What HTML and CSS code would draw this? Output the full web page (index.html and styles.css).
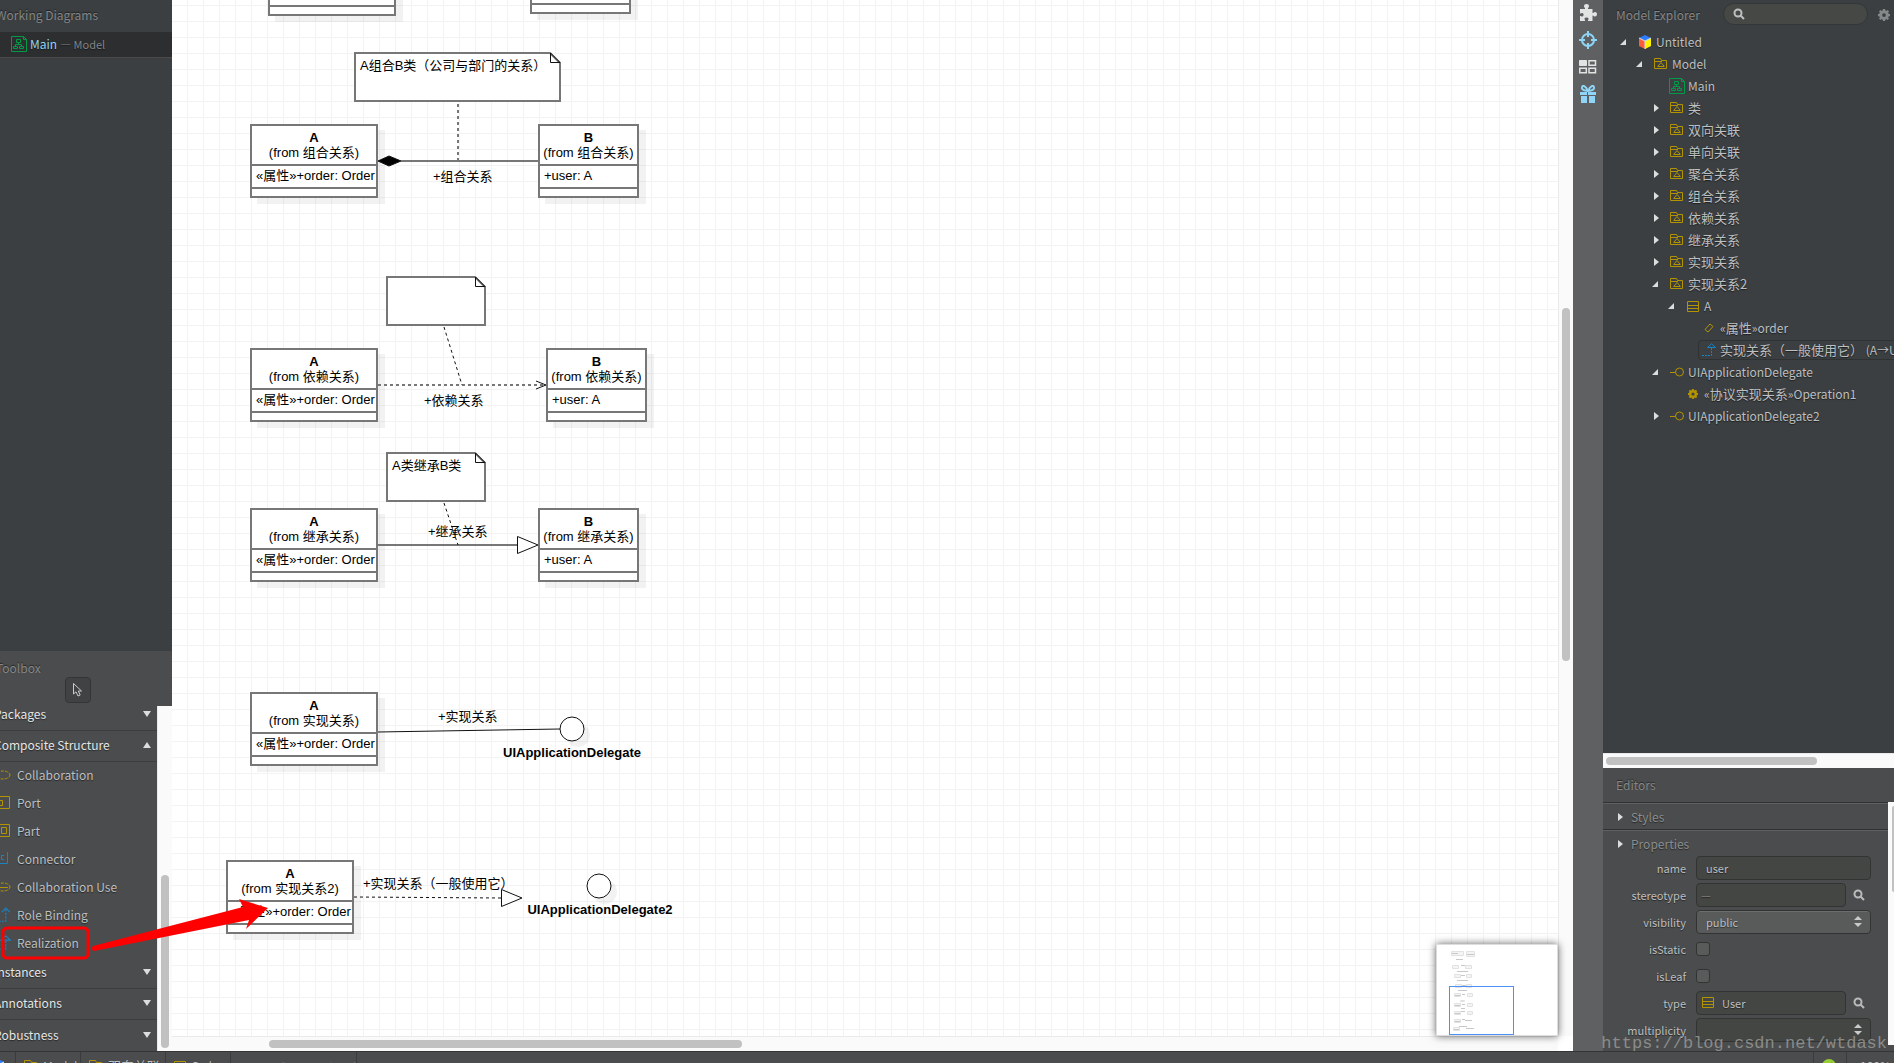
FILE: index.html
```html
<!DOCTYPE html>
<html lang="zh-CN">
<head>
    <meta charset="UTF-8">
    <meta name="viewport" content="width=device-width, initial-scale=1.0">
    <title>Untitled - Main</title>
    <link rel="stylesheet" href="styles.css">
</head>
<body>
    <!-- shared icons -->
    <svg class="sprite" aria-hidden="true">
        <symbol id="i-package" viewBox="0 0 14 12">
            <path d="M.5 3.5V.5H6.5L7.5 2.5H12.5V10.5H.5V3.5H8M3.5 8.5H10.5M4 8L7 4.5L10 8" fill="none" stroke="#b29300"/>
        </symbol>
        <symbol id="i-diagram" viewBox="0 0 16 16">
            <path d="M.5 .5H12.5L15.5 3.5V15.5H.5ZM12.5 .5V3.5H15.5M5.500 3.500H9.500V6.500H5.500ZM7.500 6.500V8.500M4.500 10.500V8.500H10.500V10.500M2.500 10.500H6.500V12.500H2.500ZM8.500 10.500H12.500V12.500H8.500Z" fill="none" stroke="#009b46"/>
        </symbol>
        <symbol id="i-class" viewBox="0 0 12 11">
            <path d="M.5 .5H11.500V10.500H.5ZM.5 4.500H11.500M.5 7.500H11.500" fill="none" stroke="#b29300"/>
        </symbol>
        <symbol id="i-attr" viewBox="0 0 10 10">
            <path d="M1 6.500L6 1L9 3.500L4 9Z" fill="none" stroke="#b29300"/>
        </symbol>
        <symbol id="i-realize" viewBox="0 0 14 14">
            <path d="M9.500 .8L13.500 4.500H5.500Z" fill="none" stroke="#1784c7"/>
            <path d="M9.500 5V12.500H0" fill="none" stroke="#1784c7" stroke-dasharray="2 1"/>
        </symbol>
        <symbol id="i-bind" viewBox="0 0 14 14">
            <path d="M6 4.500L9.500 1L13 4.500" fill="none" stroke="#1784c7"/>
            <path d="M9.500 2V12.500H0" fill="none" stroke="#1784c7" stroke-dasharray="2 1"/>
        </symbol>
        <symbol id="i-interface" viewBox="0 0 14 10">
            <path d="M0 5.500H5" stroke="#b29300"/>
            <circle cx="9.500" cy="5" r="4" fill="none" stroke="#b29300"/>
        </symbol>
        <symbol id="i-gear" viewBox="0 0 16 16">
            <circle cx="8" cy="8" r="4.500" fill="none" stroke="currentColor" stroke-width="4"/>
            <path d="M8 0V3M8 13V16M0 8H3M13 8H16M2.300 2.300L4 4M12 12L13.700 13.700M13.700 2.300L12 4M4 12L2.300 13.700" stroke="currentColor" stroke-width="3"/>
        </symbol>
        <symbol id="i-search" viewBox="0 0 12 12">
            <circle cx="5" cy="5" r="3.500" fill="none" stroke="currentColor" stroke-width="2"/>
            <path d="M7.500 7.500L11 11" stroke="currentColor" stroke-width="2"/>
        </symbol>
        <symbol id="i-collab" viewBox="0 0 16 10">
            <ellipse cx="8" cy="5" rx="7" ry="4" fill="none" stroke="#b29300" stroke-dasharray="3 1"/>
        </symbol>
        <symbol id="i-cube" viewBox="0 0 14 14">
            <path d="M7 0L13 3L7 6L1 3Z" fill="#2f7bff"/>
            <path d="M1 3L7 6V14L1 11Z" fill="#ff5c39"/>
            <path d="M13 3L7 6V14L13 11Z" fill="#fff200"/>
            <path d="M1 3L7 6V14M7 6L13 3" fill="none" stroke="#cfe2ee"/>
        </symbol>
    </svg>

    <main class="workspace">
        <aside class="sidebar">
            <section class="diagrams">
                <h2 class="panel-title">Working Diagrams</h2>
                <a class="diagram-link" href="#main">
                    <svg class="icon-16"><use href="#i-diagram"/></svg>
                    <span>Main</span> <small>— Model</small>
                </a>
            </section>
            <section class="toolbox">
                <h2 class="panel-title">Toolbox</h2>
                <button class="select-tool" aria-label="Select">
                    <svg width="12" height="16" viewBox="0 0 12 16"><path d="M1.500 1.500V12L4 9.800L6 14L8.200 13L6.300 9H9.500Z" fill="none" stroke="#c8cccd"/></svg>
                </button>
                <div class="tool-scroll">
                    <div class="tool-list">
                        <button class="group">Packages<i class="caret down"></i></button>
                        <button class="group">Composite Structure<i class="caret up"></i></button>
                        <button class="tool"><svg width="16" height="10"><use href="#i-collab"/></svg>Collaboration</button>
                        <button class="tool"><svg width="16" height="14" viewBox="0 0 16 14"><path d="M3.500 4V.5H14.500V12.500H3.500V9M1.500 4.500H7.500V9.500H1.500Z" fill="none" stroke="#b29300"/></svg>Port</button>
                        <button class="tool"><svg width="16" height="14" viewBox="0 0 16 14"><path d="M3.500 .5H14.500V12.500H3.500ZM6.500 3.500H11.500V9.500H6.500Z" fill="none" stroke="#b29300"/></svg>Part</button>
                        <button class="tool"><svg width="16" height="14" viewBox="0 0 16 14"><path d="M12.500 0V11.500H0M9 3.500H6.500V7.500H9" fill="none" stroke="#1784c7"/></svg>Connector</button>
                        <button class="tool"><svg width="16" height="10" viewBox="0 0 16 10"><use href="#i-collab"/><path d="M3 5.500H13" stroke="#b29300"/></svg>Collaboration Use</button>
                        <button class="tool"><svg width="16" height="16"><use href="#i-bind"/></svg>Role Binding</button>
                        <button class="tool"><svg width="16" height="16"><use href="#i-realize"/></svg>Realization</button>
                        <button class="group">Instances<i class="caret down"></i></button>
                        <button class="group">Annotations<i class="caret down"></i></button>
                        <button class="group">Robustness<i class="caret down"></i></button>
                    </div>
                    <div class="track vertical"><div class="thumb"></div></div>
                </div>
            </section>
        </aside>

        <section class="editor">
            <div class="canvas" id="main">
                <div class="uml wide" id="n1"><header><b>A</b><span>(from 聚合关系)</span></header><p>«属性»+order: Order</p><p></p></div>
                <div class="uml narrow" id="n2"><header><b>B</b><span>(from 聚合关系)</span></header><p>+user: A</p><p></p></div>
                <div class="uml wide" id="n3"><header><b>A</b><span>(from 组合关系)</span></header><p>«属性»+order: Order</p><p></p></div>
                <div class="uml narrow" id="n4"><header><b>B</b><span>(from 组合关系)</span></header><p>+user: A</p><p></p></div>
                <div class="uml wide" id="n5"><header><b>A</b><span>(from 依赖关系)</span></header><p>«属性»+order: Order</p><p></p></div>
                <div class="uml narrow" id="n6"><header><b>B</b><span>(from 依赖关系)</span></header><p>+user: A</p><p></p></div>
                <div class="uml wide" id="n7"><header><b>A</b><span>(from 继承关系)</span></header><p>«属性»+order: Order</p><p></p></div>
                <div class="uml narrow" id="n8"><header><b>B</b><span>(from 继承关系)</span></header><p>+user: A</p><p></p></div>
                <div class="uml wide" id="n9"><header><b>A</b><span>(from 实现关系)</span></header><p>«属性»+order: Order</p><p></p></div>
                <div class="uml wide" id="n10"><header><b>A</b><span>(from 实现关系2)</span></header><p>«属性»+order: Order</p><p></p></div>

                <!-- notes, connectors and their labels -->
                <svg class="links">
                    <g class="soft">
                        <path class="note" d="M183 53H378L388 63V101H183Z"/>
                        <path class="note" d="M215 277H303L313 287V325H215Z"/>
                        <path class="note" d="M215 453H303L313 463V501H215Z"/>
                        <path d="M229 161H366M206 545H345"/>
                        <path class="dash" d="M286 104V161M206 385H374"/>
                    </g>
                    <g class="sharp">
                        <path d="M378.500 53V62.500H388ZM303.500 277V286.500H313ZM303.500 453V462.500H313Z"/>
                        <path d="M364 381L374 385L364 389"/>
                        <path class="fill" d="M345.500 536.500V553.500L366 545ZM329.500 889.500V906.500L350 898Z"/>
                        <path d="M206 732L388 729"/>
                        <path class="dash" d="M272 327L290 385M272 503L286 545M182 897L329 898"/>
                        <path class="diamond" d="M206 161L217 156L229 161L217 166Z"/>
                        <circle class="shade" cx="406" cy="735" r="12"/>
                        <circle class="fill" cx="400" cy="729" r="12"/>
                        <circle class="shade" cx="433" cy="892" r="12"/>
                        <circle class="fill" cx="427" cy="886" r="12"/>
                    </g>
                    <text x="188" y="70">A组合B类（公司与部门的关系）</text>
                    <text x="220" y="470">A类继承B类</text>
                    <text x="261" y="181">+组合关系</text>
                    <text x="252" y="405">+依赖关系</text>
                    <text x="256" y="536">+继承关系</text>
                    <text x="266" y="721">+实现关系</text>
                    <text x="191" y="888">+实现关系（一般使用它）</text>
                    <text class="name" x="400" y="757">UIApplicationDelegate</text>
                    <text class="name" x="428" y="914">UIApplicationDelegate2</text>
                </svg>

                <div class="minimap">
                    <svg width="120" height="90" viewBox="0 0 120 90">
                        <g fill="#f4f4f4" stroke="#e2e2e2">
                            <path d="M14.500 6.500h12v4h-12zM29.500 6.500h8v5h-8zM15.500 20.500h6v3h-6zM28.500 20.500h6v3h-6zM17.500 29.500h6v3h-6zM29.500 29.500h5v3h-5zM18.500 39.500h6v3h-6zM29.500 39.500h5v3h-5zM17.500 48.500h6v3h-6zM30.500 48.500h5v3h-5zM17.500 58.500h6v3h-6zM30.500 58.500h5v3h-5zM17.500 66.500h6v3h-6zM30.500 66.500h5v3h-5zM17.500 74.500h6v3h-6zM16.500 82.500h6v3h-6zM23.500 55.500h4v1h-4z"/>
                        </g>
                        <path d="M19 14.500h7M20 26.500h11M20 35.500h11M21 45.500h9M24 20.500h4M24 30.500h4M25 40.500h4M25 49.500h3M25 59.500h3M24 63.500h4M24 66.500h4M25 74.500h3M28 75.500h7M22 81.500h8M29 83.500h8M15 8.500h6M30 9.500h7M18 50.500h5M18 60.500h5M18 68.500h5M18 76.500h5M17 84.500h5" stroke="#c8c8c8"/>
                        <rect x="12.500" y="41.500" width="64" height="48" fill="none" stroke="#4a90f5"/>
                    </svg>
                </div>
            </div>
            <div class="track vertical"><div class="thumb"></div></div>
            <div class="track horizontal"><div class="thumb canvas-h"></div></div>
        </section>

        <nav class="toolbar">
            <button aria-label="Extensions">
                <svg width="18" height="18" viewBox="0 0 18 18"><path d="M1 5H6C6.500 4 5 3.500 5 2.200C5 .8 6 0 7.500 0S10 .8 10 2.200C10 3.500 8.500 4 9 5H13.500V9C14.500 9.500 14.500 8 16 8C17.300 8 18 9 18 10.200S17.300 12.500 16 12.500C14.500 12.500 14.500 11 13.500 11.500V17H9C8.500 16 10 15.500 9.500 14.500C9 13.300 6 13.300 5.500 14.500C5.300 15.500 6.500 16 6 17H1V12C2 11.500 2.500 13 3.500 12.500C5 12 5 9.500 3.500 9C2.500 8.500 2 10 1 9.500Z" fill="#e2e3e3"/></svg>
            </button>
            <button aria-label="Alignment">
                <svg width="18" height="18" viewBox="0 0 18 18"><circle cx="9" cy="9" r="6" fill="none" stroke="#8fd5f7" stroke-width="2"/><path d="M9 0V6M9 12V18M0 9H6M12 9H18" stroke="#8fd5f7" stroke-width="2"/></svg>
            </button>
            <button aria-label="Layout">
                <svg width="18" height="14" viewBox="0 0 18 14"><path d="M.5 .5H7.500V5.500H.5Z" fill="#e2e3e3" stroke="#e2e3e3"/><path d="M10 .8H16.500V5.300H10ZM.8 8.300H7.300V12.800H.8ZM10 8.300H16.500V12.800H10Z" fill="none" stroke="#e2e3e3" stroke-width="1.500"/></svg>
            </button>
            <button aria-label="What's new">
                <svg width="18" height="18" viewBox="0 0 18 18"><path d="M1 7H17V10H1ZM2 11H8V18H2ZM10 11H16V18H10Z" fill="#8fd5f7"/><path d="M9 6C7 1 3 -1 3 3C3 6 6 5 9 6C12 5 15 6 15 3C15 -1 11 1 9 6Z" fill="none" stroke="#8fd5f7" stroke-width="2"/><path d="M8.500 7V18" stroke="#5f6061"/></svg>
            </button>
        </nav>

        <aside class="inspector">
            <section class="explorer">
                <header class="explorer-head">
                    <h2 class="panel-title">Model Explorer</h2>
                    <label class="search"><svg class="icon-12"><use href="#i-search"/></svg><input type="search" aria-label="Search"></label>
                    <button class="plain gear" aria-label="Settings"><svg class="icon-12"><use href="#i-gear"/></svg></button>
                </header>
                <ul class="tree">
                    <li class="l0"><i class="open"></i><span class="node"><svg width="14" height="14"><use href="#i-cube"/></svg>Untitled</span></li>
                    <li class="l1"><i class="open"></i><span class="node"><svg width="14" height="12"><use href="#i-package"/></svg>Model</span></li>
                    <li class="l2"><i></i><span class="node"><svg width="16" height="16"><use href="#i-diagram"/></svg>Main</span></li>
                    <li class="l2"><i class="closed"></i><span class="node cn"><svg width="14" height="12"><use href="#i-package"/></svg>类</span></li>
                    <li class="l2"><i class="closed"></i><span class="node cn"><svg width="14" height="12"><use href="#i-package"/></svg>双向关联</span></li>
                    <li class="l2"><i class="closed"></i><span class="node cn"><svg width="14" height="12"><use href="#i-package"/></svg>单向关联</span></li>
                    <li class="l2"><i class="closed"></i><span class="node cn"><svg width="14" height="12"><use href="#i-package"/></svg>聚合关系</span></li>
                    <li class="l2"><i class="closed"></i><span class="node cn"><svg width="14" height="12"><use href="#i-package"/></svg>组合关系</span></li>
                    <li class="l2"><i class="closed"></i><span class="node cn"><svg width="14" height="12"><use href="#i-package"/></svg>依赖关系</span></li>
                    <li class="l2"><i class="closed"></i><span class="node cn"><svg width="14" height="12"><use href="#i-package"/></svg>继承关系</span></li>
                    <li class="l2"><i class="closed"></i><span class="node cn"><svg width="14" height="12"><use href="#i-package"/></svg>实现关系</span></li>
                    <li class="l2"><i class="open"></i><span class="node cn"><svg width="14" height="12"><use href="#i-package"/></svg>实现关系2</span></li>
                    <li class="l3"><i class="open"></i><span class="node"><svg width="12" height="11"><use href="#i-class"/></svg>A</span></li>
                    <li class="l4"><i></i><span class="node"><svg width="10" height="10"><use href="#i-attr"/></svg><span>«<span class="cn">属性</span>»order</span></span></li>
                    <li class="l4"><i></i><span class="node selected"><svg width="14" height="14"><use href="#i-realize"/></svg><span><span class="cn">实现关系（一般使用它）</span> (A→UIApplicationDelegate2)</span></span></li>
                    <li class="l2"><i class="open"></i><span class="node"><svg width="14" height="10"><use href="#i-interface"/></svg>UIApplicationDelegate</span></li>
                    <li class="l3"><i></i><span class="node op"><svg width="10" height="10"><use href="#i-gear"/></svg><span>«<span class="cn">协议实现关系</span>»Operation1</span></span></li>
                    <li class="l2"><i class="closed"></i><span class="node"><svg width="14" height="10"><use href="#i-interface"/></svg>UIApplicationDelegate2</span></li>
                </ul>
                <div class="track horizontal"><div class="thumb tree-thumb"></div></div>
            </section>
            <section class="editors">
                <h2 class="panel-title">Editors</h2>
                <div class="editors-scroll">
                    <form class="props">
                        <h3><i class="closed"></i>Styles</h3>
                        <h3><i class="closed"></i>Properties</h3>
                        <div class="row"><label for="name">name</label><input id="name" class="field" type="text" value="user"></div>
                        <div class="row"><label for="stereotype">stereotype</label><input id="stereotype" class="field empty" type="text" value="—"><button type="button" class="plain" aria-label="Find stereotype"><svg class="icon-12"><use href="#i-search"/></svg></button></div>
                        <div class="row"><label for="visibility">visibility</label><span class="select"><select id="visibility" class="field raised"><option>public</option><option>private</option></select><i class="spin"></i></span></div>
                        <div class="row"><label for="isStatic">isStatic</label><input id="isStatic" type="checkbox"></div>
                        <div class="row"><label for="isLeaf">isLeaf</label><input id="isLeaf" type="checkbox"></div>
                        <div class="row"><label for="type">type</label><span class="select"><svg class="type-icon" width="12" height="11"><use href="#i-class"/></svg><input id="type" class="field with-icon" type="text" value="User"></span><button type="button" class="plain" aria-label="Find type"><svg class="icon-12"><use href="#i-search"/></svg></button></div>
                        <div class="row"><label for="multiplicity">multiplicity</label><span class="select"><select id="multiplicity" class="field"><option></option><option>1</option></select><i class="spin"></i></span></div>
                    </form>
                    <div class="track props-track"><div class="thumb props-thumb"></div></div>
                </div>
            </section>
        </aside>
    </main>

    <footer class="statusbar">
        <span class="first"><svg width="14" height="14"><use href="#i-cube"/></svg></span>
        <span class="model"><svg width="14" height="12"><use href="#i-package"/></svg>Model</span>
        <span class="package cn"><svg width="14" height="12"><use href="#i-package"/></svg>双向关联</span>
        <span class="order"><svg width="12" height="11"><use href="#i-class"/></svg>Order</span>
        <span class="kind">[UMLAttribute]</span>
        <span class="status-ok"><svg width="14" height="14" viewBox="0 0 14 14"><circle cx="7" cy="7" r="7" fill="#96cc34"/><path d="M4 7L6.500 9.500L10.500 4" fill="none" stroke="#4b4c4d" stroke-width="2"/></svg></span>
        <span class="zoom">100%</span>
    </footer>

    <!-- red callout from the tool to the class -->
    <svg class="callout" width="280" height="80" viewBox="0 0 280 80" aria-hidden="true">
        <rect x="3" y="37" width="85" height="30" rx="4" fill="none" stroke="#f00" stroke-width="3"/>
        <path d="M93 55Q90 58 94 60L249 29L246 38L268 17L239 8L243 16Z" fill="#f00"/>
    </svg>
    <div class="watermark">https://blog.csdn.net/wtdask</div>
</body>
</html>
```

FILE: styles.css
```css
* {
    margin: 0;
    padding: 0;
    box-sizing: border-box;
}
body {
    position: relative;
    display: flex;
    flex-direction: column;
    height: 100vh;
    overflow: hidden;
    background: #4b4c4d;
    color: #bdbfc0;
    font: 12px/16px "Noto Sans CJK SC", sans-serif;
    text-shadow: 0 1px 1px rgba(0, 0, 0, 0.5);
}
button, input, select {
    font: inherit;
    color: inherit;
    text-shadow: inherit;
    border: none;
    background: none;
}
svg {
    flex: none;
}
.sprite {
    position: absolute;
    width: 0;
    height: 0;
}
.icon-16 {
    width: 16px;
    height: 16px;
}
.icon-12 {
    width: 12px;
    height: 12px;
}
.cn {
    font-size: 13px;
}
.workspace {
    flex: 1;
    display: flex;
    min-height: 0;
}
.panel-title {
    color: #848687;
    font-size: 12px;
    font-weight: normal;
    text-shadow: 0 -1px 1px rgba(0, 0, 0, 0.5);
}

/* scrollbars */
.track {
    background: #fafafa;
}
.track.vertical {
    width: 15px;
    padding: 4px;
    border-left: 1px solid #eaeaea;
}
.track.horizontal {
    height: 15px;
    padding: 4px 3px;
    border-top: 1px solid #eaeaea;
}
.thumb {
    border-radius: 4px;
    background: #c1c1c1;
}
.vertical .thumb {
    width: 8px;
    margin-left: -1px;
}
.horizontal .thumb {
    height: 8px;
    margin-top: -1px;
}
.canvas-h {
    width: 473px;
    margin-left: 94px;
}
.tree-thumb {
    width: 74%;
}

/* left sidebar, its left edge runs off the window */
.sidebar {
    flex: none;
    display: flex;
    flex-direction: column;
    width: 184px;
    margin-left: -12px;
}
.diagrams {
    flex: 1;
    background: #3b3f41;
}
.diagrams .panel-title {
    padding: 7px 8px 9px;
}
.diagram-link {
    display: flex;
    align-items: center;
    gap: 3px;
    height: 26px;
    padding: 0 0 1px 23px;
    background: #2d2e30;
    border-bottom: 1px solid #4a4a4b;
    color: #8fd5f7;
    text-decoration: none;
}
.diagram-link small {
    color: #828485;
    font-size: 11px;
}
.toolbox {
    flex: none;
    background: #4b4c4d;
}
.toolbox .panel-title {
    padding: 9px 8px 1px;
}
.select-tool {
    display: flex;
    align-items: center;
    justify-content: center;
    width: 26px;
    height: 26px;
    margin: 0 0 3px 77px;
    background: #414243;
    border: 1px solid #343536;
    border-radius: 4px;
}
.tool-scroll {
    display: flex;
    height: 345px;
}
.tool-list {
    flex: 1;
    display: flex;
    flex-direction: column;
    justify-content: flex-end;
    overflow: hidden;
}
.tool-scroll .track {
    padding-top: 169px;
}
.tool-scroll .thumb {
    height: 173px;
}
.group {
    flex: none;
    display: flex;
    justify-content: space-between;
    align-items: center;
    height: 31px;
    padding: 0 6px 2px 6px;
    border-bottom: 1px solid #3d3e3f;
    color: #e6e7e7;
}
.group:last-child {
    border-bottom: none;
}
.tool {
    flex: none;
    display: flex;
    align-items: center;
    gap: 6px;
    height: 28px;
    padding: 0 0 2px 7px;
}
.caret {
    border: 4px solid transparent;
}
.caret.down {
    border-top: 6px solid #dcdddd;
    border-bottom: none;
}
.caret.up {
    border-bottom: 6px solid #dcdddd;
    border-top: none;
}

/* diagram canvas */
.editor {
    flex: 1;
    display: grid;
    grid-template-columns: 1fr 15px;
    grid-template-rows: 1fr 15px;
    min-width: 0;
    background: #fff;
    color: #000;
    text-shadow: none;
}
.editor .vertical {
    padding-top: 308px;
}
.editor .vertical .thumb {
    height: 353px;
}
.canvas {
    position: relative;
    min-height: 0;
    background-color: #fff;
    background-image: linear-gradient(#f3f3f3 1px, transparent 1px), linear-gradient(90deg, #f3f3f3 1px, transparent 1px);
    background-size: 16px 16px;
    background-position: 15px 5px;
    font-family: "Liberation Sans", "Noto Sans CJK SC", sans-serif;
    font-size: 13px;
}
.uml {
    position: absolute;
    height: 74px;
    border: 2px solid #777;
    background: #fff;
    box-shadow: 7px 6px 0 rgba(0, 0, 0, 0.05);
    line-height: 15px;
    white-space: nowrap;
}
.wide {
    width: 128px;
}
.narrow {
    width: 101px;
}
.uml header {
    display: flex;
    flex-direction: column;
    align-items: center;
    height: 38px;
    padding-top: 4px;
}
.uml p {
    height: 23px;
    padding: 2px 0 2px 4px;
    border-top: 2px solid #777;
}
.uml p:last-child {
    height: 9px;
}
#n1 { left: 96px; top: -58px; }
#n2 { left: 358px; top: -60px; }
#n3 { left: 78px; top: 124px; }
#n4 { left: 366px; top: 124px; }
#n5 { left: 78px; top: 348px; }
#n6 { left: 374px; top: 348px; }
#n7 { left: 78px; top: 508px; }
#n8 { left: 366px; top: 508px; }
#n9 { left: 78px; top: 692px; }
#n10 { left: 54px; top: 860px; }
.links {
    position: absolute;
    top: 0;
    left: 0;
    width: 100%;
    height: 100%;
}
.soft {
    fill: none;
    stroke: #777;
    stroke-width: 2;
}
.sharp {
    fill: none;
    stroke: #111;
}
.dash {
    stroke-dasharray: 3 3;
}
.note, .fill {
    fill: #fff;
}
.diamond {
    fill: #000;
}
.shade {
    fill: rgba(0, 0, 0, 0.05);
    stroke: none;
}
.name {
    font-weight: bold;
    text-anchor: middle;
}
.minimap {
    position: absolute;
    right: 0;
    bottom: 0;
    width: 122px;
    height: 92px;
    background: #fff;
    border: 1px solid #ddd;
    box-shadow: 0 0 8px rgba(0, 0, 0, 0.6);
}

/* icon strip */
.toolbar {
    flex: none;
    display: flex;
    flex-direction: column;
    width: 30px;
    background: #5f6061;
}
.toolbar button {
    display: flex;
    align-items: center;
    justify-content: center;
    height: 27px;
    padding-bottom: 2px;
}

/* right side */
.inspector {
    flex: none;
    display: flex;
    flex-direction: column;
    width: 291px;
}
.explorer {
    flex: 1;
    display: flex;
    flex-direction: column;
    background: #3b3f41;
    overflow: hidden;
}
.explorer-head {
    display: flex;
    align-items: center;
    height: 32px;
    padding: 0 0 2px 13px;
}
.explorer-head .panel-title {
    width: 107px;
}
.search {
    display: flex;
    align-items: center;
    gap: 6px;
    width: 145px;
    height: 22px;
    margin-bottom: 2px;
    padding-left: 9px;
    background: #464846;
    border: 1px solid #343737;
    border-radius: 11px;
}
.search input {
    width: 110px;
    outline: none;
}
.plain {
    display: flex;
    align-items: center;
    color: #b9bbbb;
}
.gear {
    margin-left: 10px;
    color: #85898a;
}
.tree {
    flex: 1;
    list-style: none;
    white-space: nowrap;
}
.tree li {
    display: flex;
    align-items: center;
    height: 22px;
    padding-bottom: 2px;
}
.tree li > i {
    flex: none;
    width: 16px;
}
.l0 { padding-left: 17px; }
.l1 { padding-left: 33px; }
.l2 { padding-left: 49px; }
.l3 { padding-left: 65px; }
.l4 { padding-left: 81px; }
.node {
    display: flex;
    align-items: center;
    height: 20px;
    gap: 3px;
    padding-left: 1px;
}
.node svg {
    min-width: 16px;
}
.op svg {
    color: #b29300;
}
.selected {
    flex: none;
    width: 400px;
    margin-left: -2px;
    border: 1px solid #2f3233;
    border-radius: 3px;
    padding-left: 2px;
}
i.open::before {
    content: "";
    display: block;
    width: 0;
    border-left: 6px solid transparent;
    border-bottom: 6px solid #dcdddd;
}
i.closed::before {
    content: "";
    display: block;
    width: 0;
    margin-left: 2px;
    border: 4px solid transparent;
    border-left: 5px solid #dcdddd;
    border-right: none;
}

.editors {
    flex: none;
    height: 283px;
    overflow: hidden;
}
.editors > .panel-title {
    height: 34px;
    padding: 9px 13px;
}
.editors-scroll {
    display: flex;
}
.props {
    flex: 1;
    font-size: 11px;
}
.props h3 {
    display: flex;
    align-items: center;
    gap: 8px;
    height: 27px;
    padding: 1px 0 0 13px;
    border-top: 1px solid #303132;
    box-shadow: inset 0 1px 0 #5f6061;
    color: #8b8d8e;
    font-size: 12px;
    font-weight: normal;
}
.row {
    display: grid;
    grid-template-columns: 83px 150px 15px;
    column-gap: 10px;
    align-items: center;
    height: 27px;
    padding-bottom: 3px;
}
.row label {
    text-align: right;
}
.row .plain {
    margin-left: -3px;
}
.field {
    appearance: none;
    width: 100%;
    height: 24px;
    padding: 0 9px;
    background: #444644;
    border: 1px solid #323332;
    border-radius: 4px;
    outline: none;
}
.field.empty {
    padding: 0 4px;
    color: #7d7f7e;
}
.field.raised {
    background: #585b59;
    box-shadow: inset 0 1px 0 #6b6e6c;
}
.field.with-icon {
    padding-left: 25px;
}
.row > .field:last-child, .row > .select:last-child {
    grid-column: 2 / 4;
}
.select {
    position: relative;
}
.type-icon {
    position: absolute;
    left: 6px;
    top: 6px;
}
.spin {
    position: absolute;
    right: 9px;
    top: 6px;
    display: flex;
    flex-direction: column;
    gap: 3px;
}
.spin::before, .spin::after {
    content: "";
    border: 4px solid transparent;
    border-top: none;
    border-bottom: 4px solid #c9cbca;
}
.spin::after {
    border-bottom: none;
    border-top: 4px solid #c9cbca;
}
input[type="checkbox"] {
    appearance: none;
    width: 14px;
    height: 14px;
    background: #585b59;
    border: 1px solid #323332;
    border-radius: 3px;
}
.props-track {
    width: 6px;
    padding: 4px 0 0 4px;
}
.props-thumb {
    height: 86px;
    border-radius: 4px 0 0 4px;
}

.statusbar {
    flex: none;
    display: flex;
    height: 12px;
    overflow: hidden;
    border-top: 1px solid #343536;
    background: #4b4c4d;
}
.statusbar span {
    flex: none;
    display: flex;
    align-items: center;
    height: 28px;
    gap: 5px;
    padding-left: 8px;
    border-right: 1px solid #3a3b3c;
}
.statusbar .first {
    width: 16px;
    padding: 0;
}
.statusbar .first svg {
    margin-left: -9px;
}
.statusbar .model {
    width: 65px;
}
.statusbar .package {
    width: 85px;
}
.statusbar .order {
    width: 65px;
}
.statusbar .kind {
    width: 126px;
    padding-left: 50px;
    color: #77797a;
    font-size: 11px;
}
.statusbar .status-ok {
    width: 34px;
    margin-left: auto;
    border-left: 1px solid #3a3b3c;
}
.statusbar .zoom {
    width: 47px;
    padding-left: 13px;
    border: none;
}

/* overlays */
.callout {
    position: absolute;
    left: 0;
    bottom: 92px;
}
.watermark {
    position: absolute;
    right: 7px;
    bottom: 9px;
    color: #9a9c98;
    font: 17px/20px "Liberation Mono", monospace;
    text-shadow: none;
    opacity: 0.8;
}
```
